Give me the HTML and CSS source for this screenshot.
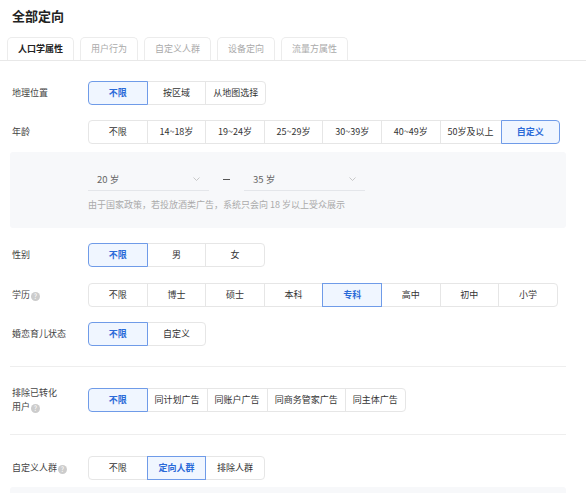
FILE: index.html
```html
<!DOCTYPE html>
<html lang="zh">
<head>
  <meta charset="UTF-8">
  <meta name="viewport" content="width=device-width, initial-scale=1.0">
  <title>全部定向</title>
  <link rel="stylesheet" href="styles.css">
</head>
<body>

  <h1 class="title">全部定向</h1>

  <div class="tabs">
    <div class="tab active">人口学属性</div>
    <div class="tab">用户行为</div>
    <div class="tab">自定义人群</div>
    <div class="tab">设备定向</div>
    <div class="tab">流量方属性</div>
  </div>

  <div class="form">
    <div class="row row-geo">
      <div class="label">地理位置</div>
      <div class="options">
        <span class="opt active">不限</span>
        <span class="opt">按区域</span>
        <span class="opt">从地图选择</span>
      </div>
    </div>

    <div class="row row-age">
      <div class="label">年龄</div>
      <div class="options">
        <span class="opt">不限</span>
        <span class="opt">14~18岁</span>
        <span class="opt">19~24岁</span>
        <span class="opt">25~29岁</span>
        <span class="opt">30~39岁</span>
        <span class="opt">40~49岁</span>
        <span class="opt">50岁及以上</span>
        <span class="opt active">自定义</span>
      </div>
    </div>

    <div class="panel age-panel">
      <div class="range">
        <div class="select">
          <span>20 岁</span>
          <svg class="chevron" width="7" height="4" viewBox="0 0 7 4"><polyline points="0.5,0.5 3.5,3.5 6.5,0.5" fill="none" stroke="#bbb" stroke-width="0.8"/></svg>
        </div>
        <span class="dash"></span>
        <div class="select">
          <span>35 岁</span>
          <svg class="chevron" width="7" height="4" viewBox="0 0 7 4"><polyline points="0.5,0.5 3.5,3.5 6.5,0.5" fill="none" stroke="#bbb" stroke-width="0.8"/></svg>
        </div>
      </div>
      <p class="hint">由于国家政策，若投放酒类广告，系统只会向 18 岁以上受众展示</p>
    </div>

    <div class="row row-gender">
      <div class="label">性别</div>
      <div class="options">
        <span class="opt active">不限</span>
        <span class="opt">男</span>
        <span class="opt">女</span>
      </div>
    </div>

    <div class="row row-edu">
      <div class="label">学历<i class="help">?</i></div>
      <div class="options">
        <span class="opt">不限</span>
        <span class="opt">博士</span>
        <span class="opt">硕士</span>
        <span class="opt">本科</span>
        <span class="opt active">专科</span>
        <span class="opt">高中</span>
        <span class="opt">初中</span>
        <span class="opt">小学</span>
      </div>
    </div>

    <div class="row row-marital">
      <div class="label">婚恋育儿状态</div>
      <div class="options">
        <span class="opt active">不限</span>
        <span class="opt">自定义</span>
      </div>
    </div>

    <div class="divider divider-1"></div>

    <div class="row row-exclude">
      <div class="label">排除已转化<br>用户<i class="help">?</i></div>
      <div class="options">
        <span class="opt active">不限</span>
        <span class="opt">同计划广告</span>
        <span class="opt">同账户广告</span>
        <span class="opt">同商务管家广告</span>
        <span class="opt">同主体广告</span>
      </div>
    </div>

    <div class="divider divider-2"></div>

    <div class="row row-custom">
      <div class="label">自定义人群<i class="help">?</i></div>
      <div class="options">
        <span class="opt">不限</span>
        <span class="opt active">定向人群</span>
        <span class="opt">排除人群</span>
      </div>
    </div>

    <div class="panel crowd-panel"></div>
  </div>

</body>
</html>
```

FILE: styles.css
```css
body {
  margin: 0;
  font-family: "Noto Sans CJK SC", "Noto Sans", sans-serif;
  font-size: 9px;
  color: #333;
  background-color: #fff;
}

.title {
  margin: 0;
  padding: 8px 12px 0;
  font-size: 13px;
  line-height: 15px;
  font-weight: bold;
  color: #222;
}

.tabs {
  display: flex;
  gap: 6px;
  margin-top: 14px;
  padding-left: 7px;
  border-bottom: 1px solid #e8e8e8;
}

.tab {
  height: 22px;
  line-height: 22px;
  padding: 0 10px;
  border: 1px solid #ececec;
  border-bottom: none;
  border-radius: 5px 5px 0 0;
  color: #aaa;
}

.tab.active {
  color: #222;
  font-weight: bold;
}

.form {
  padding: 0 20px 0 10px;
}

.row {
  display: flex;
  align-items: center;
}

.label {
  width: 78px;
  flex-shrink: 0;
  padding-left: 2px;
  box-sizing: border-box;
  color: #444;
  line-height: 14px;
}

.help {
  display: inline-block;
  width: 9px;
  height: 9px;
  margin-left: 1px;
  border-radius: 50%;
  background-color: #ccc;
  color: #fff;
  font-style: normal;
  font-size: 7px;
  line-height: 9px;
  text-align: center;
  vertical-align: -1px;
}

.options {
  display: flex;
}

.opt {
  position: relative;
  min-width: 59.6px;
  height: 24px;
  line-height: 22px;
  padding: 0 7px;
  box-sizing: border-box;
  border: 1px solid #e6e6e6;
  margin-left: -1px;
  text-align: center;
  white-space: nowrap;
  color: #333;
}

.opt:first-child {
  margin-left: 0;
  border-radius: 4px 0 0 4px;
}

.opt:last-child {
  border-radius: 0 4px 4px 0;
}

.opt.active {
  z-index: 1;
  border-color: #6f9be8;
  background-color: #f0f6ff;
  color: #2b6ad8;
  font-weight: bold;
}

.row-geo { margin-top: 20px; }
.row-age { margin-top: 15px; }
.row-gender { margin-top: 15px; }
.row-edu { margin-top: 16px; }
.row-marital { margin-top: 15px; }
.row-exclude { margin-top: 19px; }
.row-custom { margin-top: 21px; }

.panel {
  background-color: #f7f8fa;
  border-radius: 3px;
}

.age-panel {
  margin-top: 8px;
  height: 76px;
  padding: 16px 0 0 78px;
  box-sizing: border-box;
}

.range {
  display: flex;
  align-items: center;
}

.select {
  display: flex;
  align-items: center;
  justify-content: space-between;
  width: 121px;
  height: 23px;
  padding: 0 9px 0 9px;
  box-sizing: border-box;
  border-bottom: 1px solid #e4e6ea;
  color: #666;
  font-size: 9.5px;
}

.dash {
  width: 7px;
  height: 1px;
  margin: 0 14px;
  background-color: #555;
}

.hint {
  margin: 8px 0 0;
  line-height: 12px;
  color: #aaa;
}

.divider {
  border-top: 1px solid #eee;
}

.divider-1 { margin-top: 20px; }
.divider-2 { margin-top: 20px; }

.crowd-panel {
  margin-top: 7px;
  height: 6px;
  border-radius: 3px 3px 0 0;
}
```
